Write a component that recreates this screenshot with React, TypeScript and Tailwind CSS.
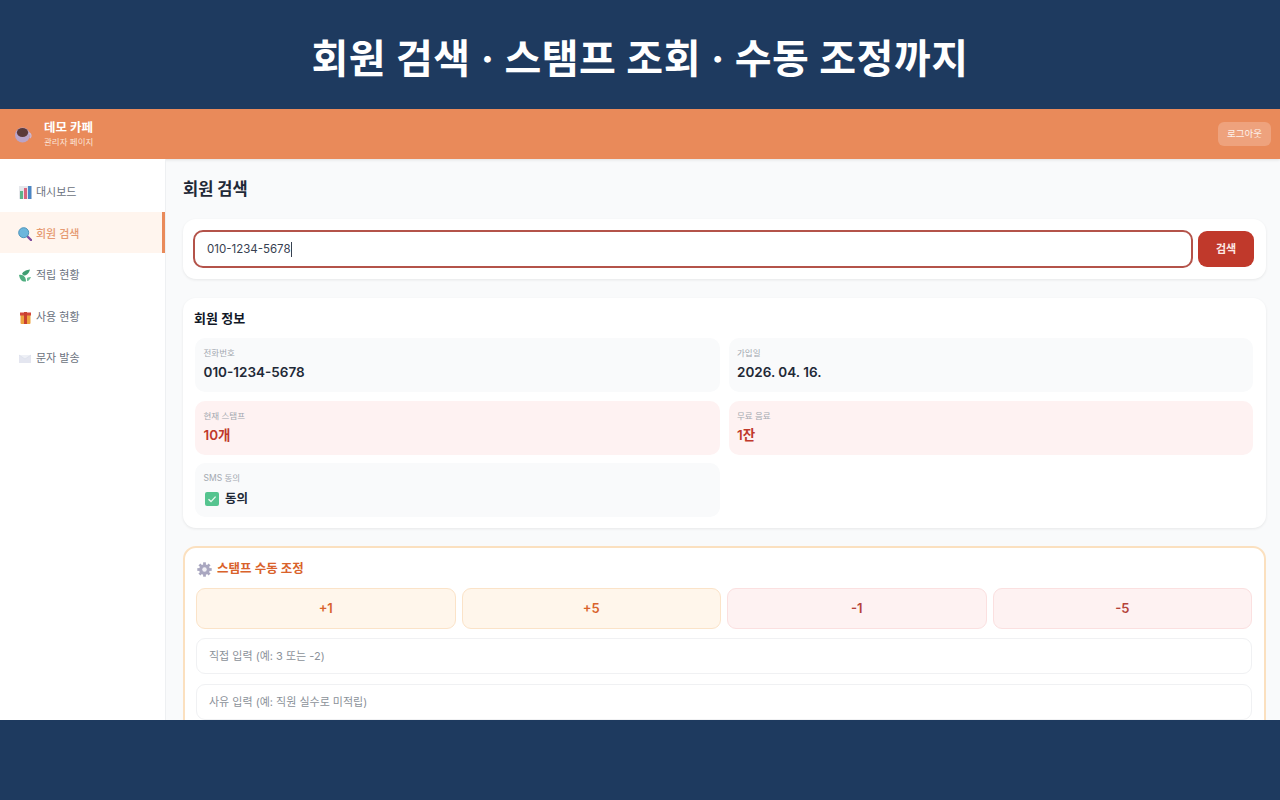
const font = "[font-family:Inter,'Noto_Sans_CJK_KR',sans-serif]";

function Coffee() {
  return (
    <svg width="18" height="18" viewBox="0 0 18 18">
      <ellipse cx="8.5" cy="10" rx="7.5" ry="7.5" fill="#b9a4c9" />
      <path d="M15 8 a3 3 0 0 1 1 5" fill="none" stroke="#c9b8d6" strokeWidth="1.4" />
      <ellipse cx="8.5" cy="7.5" rx="5.6" ry="4.6" fill="#5b3a3a" />
    </svg>
  );
}
function Chart() {
  return (
    <svg width="13" height="13" viewBox="0 0 13 13">
      <rect width="13" height="13" fill="#e6e8ec" />
      <rect x="1" y="5" width="3" height="8" fill="#5fb58a" />
      <rect x="5" y="2" width="3" height="11" fill="#d9657f" />
      <rect x="9" y="0" width="3.4" height="13" fill="#4a86c5" />
    </svg>
  );
}
function Glass() {
  return (
    <svg width="14" height="14" viewBox="0 0 14 14">
      <line x1="8.5" y1="8.5" x2="13" y2="13" stroke="#7d4a9e" strokeWidth="2.4" strokeLinecap="round" />
      <circle cx="5.7" cy="5.7" r="5" fill="#6cb6dc" stroke="#4d93ba" strokeWidth="1" />
    </svg>
  );
}
function Leaf() {
  return (
    <svg width="12" height="13" viewBox="0 0 12 13">
      <path d="M0 6 C4 5 7 8 7 12.5 C3 13 1 11 0 6Z" fill="#4fae80" />
      <path d="M3 5 C4 2 8 1 11 0.5 C10 4 8 6.5 5 6.5Z" fill="#3f9d72" />
      <path d="M8 9 C9 8 11 8 12 8 C11 10 10 12 8 12Z" fill="#6cc097" />
    </svg>
  );
}
function Gift() {
  return (
    <svg width="11" height="13" viewBox="0 0 11 13">
      <rect x="0.5" y="3" width="10" height="10" rx="1" fill="#eda33f" />
      <rect x="0" y="1.5" width="11" height="3" fill="#d4483b" />
      <rect x="4" y="1" width="3" height="12" fill="#c8402f" />
    </svg>
  );
}
function Mail() {
  return (
    <svg width="12" height="10" viewBox="0 0 12 10">
      <rect y="1" width="12" height="8" fill="#e4e6f0" />
      <path d="M0 1 L6 5 L12 1" fill="#eef0f6" stroke="#d5d8e6" strokeWidth="0.5" />
    </svg>
  );
}
function Check() {
  return (
    <svg width="14" height="14" viewBox="0 0 14 14">
      <rect width="14" height="14" rx="2" fill="#55c48f" />
      <path d="M3.5 7.2 L6 9.6 L10.6 4.6" fill="none" stroke="#e9f8f0" strokeWidth="1.4" />
    </svg>
  );
}
function Gear() {
  return (
    <svg width="15" height="15" viewBox="0 0 24 24">
      <g fill="#a9a7c0">
        <circle cx="12" cy="12" r="8.5" />
        {[0, 45, 90, 135, 180, 225, 270, 315].map((a) => (
          <rect key={a} x="9.8" y="0.5" width="4.4" height="5" transform={`rotate(${a} 12 12)`} />
        ))}
      </g>
      <circle cx="12" cy="12" r="3.6" fill="#f0eff5" />
    </svg>
  );
}

const nav = [
  { icon: <Chart />, label: "대시보드" },
  { icon: <Glass />, label: "회원 검색", active: true },
  { icon: <Leaf />, label: "적립 현황" },
  { icon: <Gift />, label: "사용 현황" },
  { icon: <Mail />, label: "문자 발송" },
];

function Cell({ label, value, tone }: { label: string; value: React.ReactNode; tone?: boolean }) {
  return (
    <div className={`h-[54px] rounded-[10px] pt-[9px] pr-[9px] pl-[8.5px] ${tone ? "bg-[#fef2f2]" : "bg-[#f9fafb]"}`}>
      <div className="text-[8.5px] leading-[12px] text-[#a3a8b0]">{label}</div>
      <div className={`mt-[3px] text-[13.5px] leading-[20px] font-semibold ${tone ? "text-[#c0392b]" : "text-[#1f2937]"}`}>{value}</div>
    </div>
  );
}

function Adjust({ label, warm }: { label: string; warm?: boolean }) {
  return (
    <div
      className={`flex h-[41px] flex-1 items-center justify-center rounded-[9px] border text-[13px] font-semibold ${
        warm ? "border-[#fbe3c8] bg-[#fff6eb] text-[#d9622b]" : "border-[#fbe0e0] bg-[#fef2f2] text-[#b5433a]"
      }`}
    >
      {label}
    </div>
  );
}

function Field({ text }: { text: string }) {
  return (
    <div className="flex h-[36px] shrink-0 items-center rounded-[9px] border border-[#f0f1f3] bg-white px-3 text-[11px] text-[#8b9199]">
      {text}
    </div>
  );
}

export default function App() {
  return (
    <div className={`flex h-[800px] w-[1280px] flex-col overflow-hidden bg-[#1e3a5f] ${font}`}>
      <div className="flex h-[109px] shrink-0 items-center justify-center pt-[9px] text-[40px] font-bold tracking-[0.5px] text-white">
        회원 검색 · 스탬프 조회 · 수동 조정까지
      </div>
      <div className="flex h-[611px] shrink-0 flex-col overflow-hidden bg-[#f9fafb]">
        <header className="flex h-[50px] shrink-0 items-center justify-between bg-[#e98a5a] pr-[9px] pl-[14px] shadow-[0_1px_3px_rgba(0,0,0,0.1)]">
          <div className="flex items-center gap-[12px]">
            <Coffee />
            <div>
              <div className="text-[12.5px] leading-[16px] font-bold text-white">데모 카페</div>
              <div className="text-[8.5px] leading-[12px] text-[#fbe3d6]">관리자 페이지</div>
            </div>
          </div>
          <div className="flex h-[24px] w-[53px] items-center justify-center rounded-[6px] bg-[#eea27d] text-[9.5px] text-[#fdf1ea]">
            로그아웃
          </div>
        </header>
        <div className="flex min-h-0 flex-1">
          <aside className="w-[166px] shrink-0 border-r border-[#eef0f2] bg-white pt-[11px]">
            {nav.map((n) => (
              <div
                key={n.label}
                className={`flex h-[41.6px] items-center gap-[4px] border-r-[3px] pt-[3px] pl-[18px] text-[11px] ${
                  n.active ? "border-[#e98a5a] bg-[#fff5ee] font-medium text-[#e69a72]" : "border-transparent text-[#6b7280]"
                }`}
              >
                <span className="flex w-[14px] items-center justify-center">{n.icon}</span>
                <span>{n.label}</span>
              </div>
            ))}
          </aside>
          <main className="flex min-w-0 flex-1 flex-col overflow-hidden pt-[19px] pr-[14px] pl-[17px]">
            <h1 className="text-[16.5px] leading-[22px] font-bold text-[#1f2937]">회원 검색</h1>
            <section className="mt-[19px] flex h-[60px] shrink-0 items-center gap-[5px] rounded-[13px] bg-white pr-[12px] pl-[10px] shadow-[0_1px_3px_rgba(0,0,0,0.08)]">
              <div className="flex h-[38px] flex-1 items-center rounded-[10px] border-2 border-[#b4534a] bg-white px-[12px] pt-[1px] text-[11.5px] text-[#374151]">
                010-1234-5678<span className="ml-[0.5px] h-[15px] w-px bg-[#374151]" />
              </div>
              <div className="flex h-[36px] w-[56px] items-center justify-center rounded-[9px] bg-[#c0392b] text-[11px] font-semibold text-[#fde9e6]">
                검색
              </div>
            </section>
            <section className="mt-[19px] h-[230px] shrink-0 rounded-[13px] bg-white pt-[12px] pr-[13px] pl-[12px] shadow-[0_1px_3px_rgba(0,0,0,0.08)]">
              <h2 className="-mt-px -ml-px text-[13px] leading-[18px] font-semibold text-[#111827]">회원 정보</h2>
              <div className="mt-[11px] grid grid-cols-2 gap-x-[9px] gap-y-[8.5px]">
                <Cell label="전화번호" value="010-1234-5678" />
                <Cell label="가입일" value="2026. 04. 16." />
                <Cell label="현재 스탬프" value="10개" tone />
                <Cell label="무료 음료" value="1잔" tone />
                <Cell
                  label="SMS 동의"
                  value={
                    <span className="flex items-center gap-[6px] pt-[2px] pl-[1.5px] text-[12.5px]">
                      <Check />
                      동의
                    </span>
                  }
                />
              </div>
            </section>
            <section className="mt-[18px] flex h-[200px] shrink-0 flex-col gap-[9px] rounded-[13px] border-2 border-[#fbe0bf] bg-white pt-[12px] pr-[12px] pl-[11px]">
              <h2 className="mb-[1px] flex h-[18px] items-center gap-[5px] pl-[1px] text-[12.5px] font-semibold text-[#d9622b]">
                <Gear />
                스탬프 수동 조정
              </h2>
              <div className="flex gap-[6px]">
                <Adjust label="+1" warm />
                <Adjust label="+5" warm />
                <Adjust label="-1" />
                <Adjust label="-5" />
              </div>
              <Field text="직접 입력 (예: 3 또는 -2)" />
              <div className="mt-[1px]">
                <Field text="사유 입력 (예: 직원 실수로 미적립)" />
              </div>
            </section>
          </main>
        </div>
      </div>
    </div>
  );
}
